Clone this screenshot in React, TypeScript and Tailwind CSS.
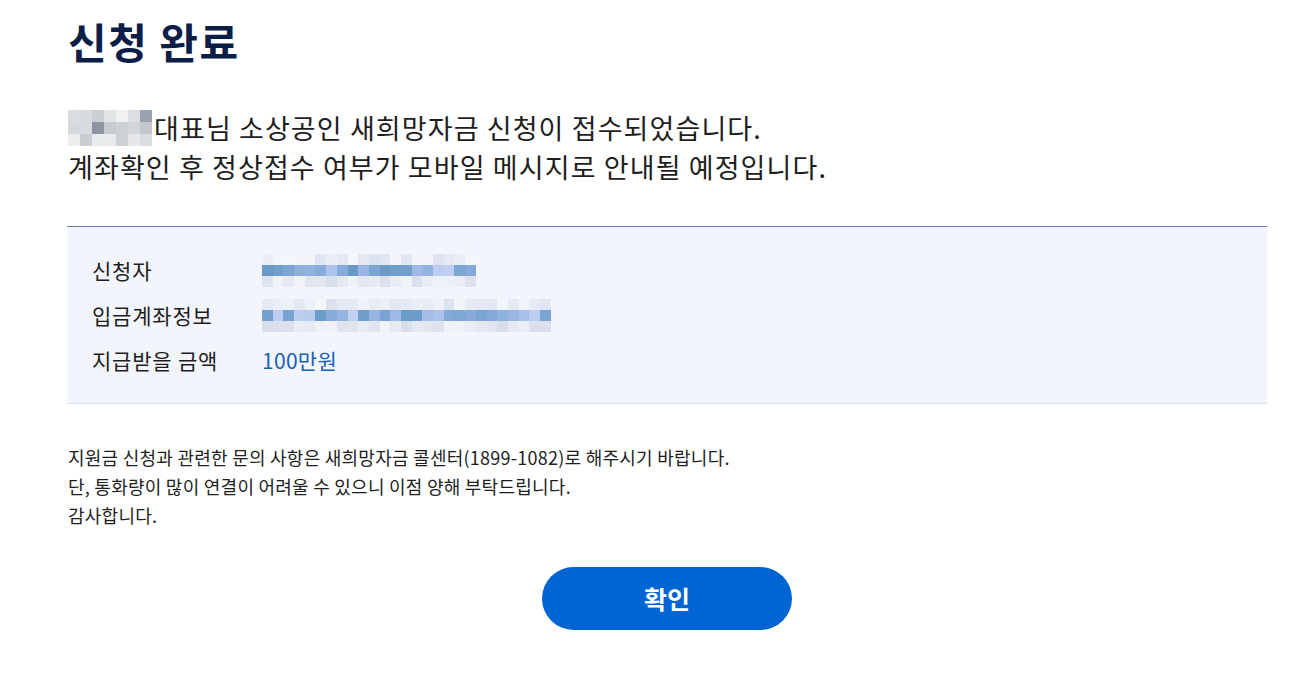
import React from "react";

const FONT = { fontFamily: '"Noto Sans CJK KR", "Noto Sans", sans-serif' };

function rand(seed: number) {
  const x = Math.sin(seed * 12.9898 + 78.233) * 43758.5453;
  return x - Math.floor(x);
}

function Mosaic({
  cols,
  rows,
  size,
  seed,
  palette,
}: {
  cols: number;
  rows: number;
  size: number;
  seed: number;
  palette: (r: number, c: number, v: number) => string;
}) {
  const cells = [];
  for (let r = 0; r < rows; r++) {
    for (let c = 0; c < cols; c++) {
      const v = rand(seed + r * 97 + c * 13);
      cells.push(
        <div
          key={`${r}-${c}`}
          style={{ width: size, height: size, background: palette(r, c, v) }}
        />
      );
    }
  }
  return (
    <div
      className="grid"
      style={{ gridTemplateColumns: `repeat(${cols}, ${size}px)` }}
    >
      {cells}
    </div>
  );
}

const bluePalette = (r: number, _c: number, v: number) => {
  if (r === 0) {
    const l = 90 + v * 7;
    return `hsl(220, 40%, ${l}%)`;
  }
  if (r === 1) {
    const l = 58 + v * 28;
    return `hsl(${208 + v * 14}, ${45 + v * 20}%, ${l}%)`;
  }
  const l = 88 + v * 8;
  return `hsl(220, 35%, ${l}%)`;
};

const grayPalette = (r: number, c: number, v: number) => {
  if (r === 1 && c === 2) return "#8d96a0";
  if (r === 0 && c === 6) return "#9aa3ad";
  const l = r === 1 ? 70 + v * 25 : 78 + v * 18;
  return `hsl(200, 8%, ${l}%)`;
};

export default function App() {
  return (
    <div className="min-h-[682px] w-full bg-white" style={FONT}>
      <div className="w-[1200px] ml-[67px] pt-[12px]">
        <h1 className="text-[42px] font-bold leading-[58px] tracking-[1.5px] text-[#0c1d47] pl-[1px]">
          신청 완료
        </h1>

        <div className="mt-[38px] text-[27px] leading-[39px] tracking-[1.1px] text-[#1e1e1e] pl-[1px]">
          <div className="flex items-center">
            <span className="inline-block mr-[2px]">
              <Mosaic cols={7} rows={3} size={12} seed={3} palette={grayPalette} />
            </span>
            <span>대표님 소상공인 새희망자금 신청이 접수되었습니다.</span>
          </div>
          <div>계좌확인 후 정상접수 여부가 모바일 메시지로 안내될 예정입니다.</div>
        </div>

        <div className="mt-[40px] border-t border-t-[#7078b2] border-b border-b-[#dde3ee] bg-[#f2f5fb] pt-[21px] pb-[19px] pl-[25px]">
          <div className="flex items-center h-[45px]">
            <div className="w-[170px] text-[21px] tracking-[0.8px] text-[#1e1e1e]">신청자</div>
            <Mosaic cols={20} rows={3} size={10.7} seed={11} palette={bluePalette} />
          </div>
          <div className="flex items-center h-[45px]">
            <div className="w-[170px] text-[21px] tracking-[0.8px] text-[#1e1e1e]">입금계좌정보</div>
            <Mosaic cols={27} rows={3} size={10.7} seed={57} palette={bluePalette} />
          </div>
          <div className="flex items-center h-[46px]">
            <div className="w-[170px] text-[21px] tracking-[0.8px] text-[#1e1e1e]">지급받을 금액</div>
            <div className="text-[21px] text-[#1a5fb8] tracking-[0.3px]">100만원</div>
          </div>
        </div>

        <div className="mt-[39px] text-[18px] leading-[29px] text-[#1e1e1e] tracking-[0.25px] pl-[1px]">
          <div>지원금 신청과 관련한 문의 사항은 새희망자금 콜센터(1899-1082)로 해주시기 바랍니다.</div>
          <div>단, 통화량이 많이 연결이 어려울 수 있으니 이점 양해 부탁드립니다.</div>
          <div>감사합니다.</div>
        </div>

        <div className="mt-[37px] flex justify-center">
          <button className="w-[250px] h-[63px] rounded-full bg-[#0064d2] text-white text-[25px] font-bold">
            확인
          </button>
        </div>
      </div>
    </div>
  );
}
